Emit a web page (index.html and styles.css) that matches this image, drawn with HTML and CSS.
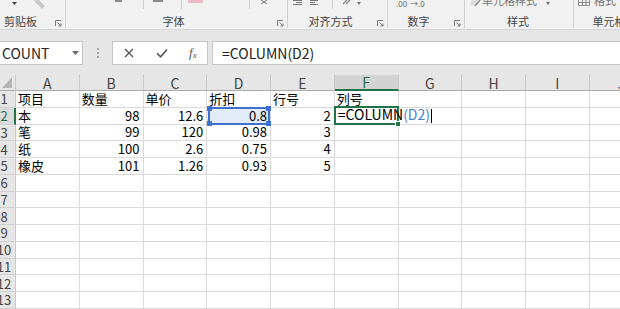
FILE: index.html
```html
<!DOCTYPE html>
<html lang="zh-CN">
<head>
  <meta charset="UTF-8">
  <title>COLUMN</title>
  <link rel="stylesheet" href="styles.css">
</head>
<body>
  <div class="ribbon">
    <div class="group g1">
      <div class="tools">
        <svg class="caret" style="margin-left:12px" width="5" height="4" viewBox="0 0 5 4"><path d="M0 0h5L2.5 3z" fill="#444"/></svg>
        <svg style="margin-left:16px" width="13" height="9" viewBox="0 0 13 9"><path d="M1 0l5 0 6 6-3 3-6-6z" fill="#c9c9c9"/></svg>
      </div>
      <div class="label">剪贴板</div>
      <svg class="launcher" width="7" height="7" viewBox="0 0 7 7"><path d="M.5 6V.5H6M2.5 2.5l3.5 3.5M6 3.5V6H3.5" fill="none" stroke="#7a7a7a"/></svg>
    </div>
    <div class="group g2">
      <div class="tools">
        <span class="dash" style="margin-left:49px;width:7px"></span>
        <span class="sep" style="margin-left:21px"></span>
        <span class="dash" style="margin-left:9px;width:10px"></span>
        <span class="sep" style="margin-left:18px"></span>
        <span class="swatch" style="margin-left:6px"></span>
        <span class="sep" style="margin-left:46px"></span>
        <svg style="margin-left:11px" width="6" height="4" viewBox="0 0 6 4"><path d="M0 0l6 4M6 0L0 4" stroke="#777"/></svg>
      </div>
      <div class="label">字体</div>
      <svg class="launcher" width="7" height="7" viewBox="0 0 7 7"><path d="M.5 6V.5H6M2.5 2.5l3.5 3.5M6 3.5V6H3.5" fill="none" stroke="#7a7a7a"/></svg>
    </div>
    <div class="group g3">
      <div class="tools">
        <svg style="margin-left:5px" width="9" height="5" viewBox="0 0 9 5"><path d="M0 .5h9M3 2.5h6M0 4.5h9" stroke="#777"/></svg>
        <svg style="margin-left:8px" width="8" height="5" viewBox="0 0 8 5"><path d="M0 .5h8M0 2.5h5M0 4.5h8" stroke="#777"/></svg>
        <span class="sep" style="margin-left:14px"></span>
        <svg style="margin-left:9px" width="10" height="5" viewBox="0 0 10 5"><path d="M1 4L5 0M4 4l4-4" stroke="#8a8a8a" stroke-width="1.4"/></svg>
        <svg class="caret" style="margin-left:5px" width="4" height="3" viewBox="0 0 4 3"><path d="M0 0h4L2 3z" fill="#777"/></svg>
      </div>
      <div class="label">对齐方式</div>
      <svg class="launcher" width="7" height="7" viewBox="0 0 7 7"><path d="M.5 6V.5H6M2.5 2.5l3.5 3.5M6 3.5V6H3.5" fill="none" stroke="#7a7a7a"/></svg>
    </div>
    <div class="group g4">
      <div class="tools">
        <span class="tiny" style="margin-left:8px">.00</span>
        <span class="tiny" style="margin-left:3px">→.0</span>
      </div>
      <div class="label">数字</div>
      <svg class="launcher" width="7" height="7" viewBox="0 0 7 7"><path d="M.5 6V.5H6M2.5 2.5l3.5 3.5M6 3.5V6H3.5" fill="none" stroke="#7a7a7a"/></svg>
    </div>
    <div class="group g5">
      <div class="tools">
        <svg style="margin-left:6px" width="10" height="7" viewBox="0 0 10 7"><path d="M0 0h7v5H0z" fill="#dcdcdc"/><path d="M4 6l5-6" stroke="#8a8a8a" stroke-width="1.4"/></svg>
        <span class="cut" style="margin-left:1px">单元格样式</span>
        <svg class="caret" style="margin-left:9px" width="4" height="3" viewBox="0 0 4 3"><path d="M0 0h4L2 3z" fill="#777"/></svg>
      </div>
      <div class="label">样式</div>
    </div>
    <div class="group g6">
      <div class="tools">
        <svg style="margin-left:4px" width="12" height="6" viewBox="0 0 12 6"><path d="M.5 0v5.5h11V0M.5 2.5h11M4.5 0v6M8 0v6" fill="none" stroke="#8a8a8a"/></svg>
        <span class="cut" style="margin-left:4px">格式</span>
        <svg class="caret" style="margin-left:4px" width="4" height="3" viewBox="0 0 4 3"><path d="M0 0h4L2 3z" fill="#777"/></svg>
      </div>
      <div class="label">单元格</div>
    </div>
  </div>

  <div class="formula-area">
    <div class="name-box">
      <span>COUNT</span>
      <svg width="7" height="4" viewBox="0 0 7 4"><path d="M0 0h7L3.5 4z" fill="#6d6d6d"/></svg>
    </div>
    <div class="grip">
      <svg width="2" height="10" viewBox="0 0 2 10"><path d="M0 0h2v2H0zM0 4h2v2H0zM0 8h2v2H0z" fill="#a8a8a8"/></svg>
    </div>
    <div class="fx-buttons">
      <svg class="btn-x" width="10" height="10" viewBox="0 0 10 10"><path d="M1 1l8 8M9 1L1 9" stroke="#555" stroke-width="1.3"/></svg>
      <svg class="btn-ok" width="12" height="10" viewBox="0 0 12 10"><path d="M1 5.2l3.6 3.6L11 1.4" fill="none" stroke="#555" stroke-width="1.6"/></svg>
      <span class="fx">f<sub>x</sub></span>
    </div>
    <div class="formula-input">=COLUMN(D2)</div>
  </div>

  <div class="sheet">
    <div class="corner"><svg width="10" height="11" viewBox="0 0 10 11"><path d="M10 0v11H0z" fill="#b4b4b4"/></svg></div>
    <div class="ch">A</div><div class="ch">B</div><div class="ch">C</div><div class="ch">D</div><div class="ch">E</div>
    <div class="ch sel">F</div><div class="ch">G</div><div class="ch">H</div><div class="ch">I</div><div class="ch">J</div>

    <div class="rh"><span>1</span></div>
    <div class="c">项目</div><div class="c">数量</div><div class="c">单价</div><div class="c">折扣</div><div class="c">行号</div>
    <div class="c">列号</div><div class="c"></div><div class="c"></div><div class="c"></div><div class="c"></div>

    <div class="rh sel"><span>2</span></div>
    <div class="c">本</div><div class="c n">98</div><div class="c n">12.6</div>
    <div class="c n ref">0.8<div class="ref-frame"><i class="h tl"></i><i class="h tr"></i><i class="h bl"></i><i class="h br"></i></div></div>
    <div class="c n">2</div>
    <div class="c active"><span class="edit">=COLUMN<span class="arg">(D2)</span><span class="cursor"></span></span><div class="frame"><i class="fill"></i></div></div>
    <div class="c"></div><div class="c"></div><div class="c"></div><div class="c"></div>

    <div class="rh"><span>3</span></div>
    <div class="c">笔</div><div class="c n">99</div><div class="c n">120</div><div class="c n">0.98</div><div class="c n">3</div>
    <div class="c"></div><div class="c"></div><div class="c"></div><div class="c"></div><div class="c"></div>

    <div class="rh"><span>4</span></div>
    <div class="c">纸</div><div class="c n">100</div><div class="c n">2.6</div><div class="c n">0.75</div><div class="c n">4</div>
    <div class="c"></div><div class="c"></div><div class="c"></div><div class="c"></div><div class="c"></div>

    <div class="rh"><span>5</span></div>
    <div class="c">橡皮</div><div class="c n">101</div><div class="c n">1.26</div><div class="c n">0.93</div><div class="c n">5</div>
    <div class="c"></div><div class="c"></div><div class="c"></div><div class="c"></div><div class="c"></div>

    <div class="rh"><span>6</span></div><div class="c"></div><div class="c"></div><div class="c"></div><div class="c"></div><div class="c"></div><div class="c"></div><div class="c"></div><div class="c"></div><div class="c"></div><div class="c"></div>
    <div class="rh"><span>7</span></div><div class="c"></div><div class="c"></div><div class="c"></div><div class="c"></div><div class="c"></div><div class="c"></div><div class="c"></div><div class="c"></div><div class="c"></div><div class="c"></div>
    <div class="rh"><span>8</span></div><div class="c"></div><div class="c"></div><div class="c"></div><div class="c"></div><div class="c"></div><div class="c"></div><div class="c"></div><div class="c"></div><div class="c"></div><div class="c"></div>
    <div class="rh"><span>9</span></div><div class="c"></div><div class="c"></div><div class="c"></div><div class="c"></div><div class="c"></div><div class="c"></div><div class="c"></div><div class="c"></div><div class="c"></div><div class="c"></div>
    <div class="rh"><span>10</span></div><div class="c"></div><div class="c"></div><div class="c"></div><div class="c"></div><div class="c"></div><div class="c"></div><div class="c"></div><div class="c"></div><div class="c"></div><div class="c"></div>
    <div class="rh"><span>11</span></div><div class="c"></div><div class="c"></div><div class="c"></div><div class="c"></div><div class="c"></div><div class="c"></div><div class="c"></div><div class="c"></div><div class="c"></div><div class="c"></div>
    <div class="rh"><span>12</span></div><div class="c"></div><div class="c"></div><div class="c"></div><div class="c"></div><div class="c"></div><div class="c"></div><div class="c"></div><div class="c"></div><div class="c"></div><div class="c"></div>
    <div class="rh"><span>13</span></div><div class="c"></div><div class="c"></div><div class="c"></div><div class="c"></div><div class="c"></div><div class="c"></div><div class="c"></div><div class="c"></div><div class="c"></div><div class="c"></div>
  </div>
</body>
</html>
```

FILE: styles.css
```css
* {
  box-sizing: border-box;
}
body {
  margin: 0;
  width: 620px;
  height: 309px;
  overflow: hidden;
  background: #fff;
  font-family: "Noto Sans CJK SC", "Liberation Sans", sans-serif;
  color: #000;
}
.ribbon {
  display: flex;
  height: 30px;
  background: #f1f1f1;
  border-bottom: 1px solid #d6d6d6;
  overflow: hidden;
}
.group {
  position: relative;
  flex: none;
  display: flex;
  flex-direction: column;
  border-right: 1px solid #d2d2d2;
  height: 28px;
}
.g1 { width: 66px; }
.g2 { width: 222px; }
.g3 { width: 100px; }
.g4 { width: 77px; }
.g5 { width: 109px; }
.g6 { width: 70px; border-right: none; }
.tools {
  height: 15px;
  display: flex;
  align-items: flex-start;
  overflow: hidden;
}
.tools > * {
  flex: none;
}
.caret {
  margin-top: 2px;
}
.dash {
  height: 2px;
  background: #8a8a8a;
}
.sep {
  width: 1px;
  height: 9px;
  background: #d0d0d0;
}
.swatch {
  width: 15px;
  height: 3px;
  background: #ebb9c4;
}
.tiny {
  font-size: 8px;
  line-height: 8px;
  color: #666;
  margin-top: 0;
}
.cut {
  font-size: 11px;
  line-height: 11px;
  color: #777;
  margin-top: -5px;
}
.label {
  font-size: 11px;
  line-height: 13px;
  color: #444;
  text-align: center;
}
.g1 .label { text-align: left; padding-left: 4px; }
.g2 .label { padding-right: 6px; }
.g3 .label { padding-right: 14px; }
.g4 .label { padding-right: 15px; }
.g5 .label { padding-right: 2px; }
.launcher {
  position: absolute;
  right: 3px;
  bottom: 1px;
}

.formula-area {
  display: flex;
  align-items: flex-start;
  height: 45px;
  padding-top: 11px;
  background: #e6e6e6;
}
.name-box {
  flex: none;
  width: 83px;
  height: 24px;
  display: flex;
  align-items: center;
  justify-content: space-between;
  padding: 0 3px 0 2px;
  background: #fff;
  border: 1px solid #c6c6c6;
  border-left: none;
  font-size: 14px;
  line-height: 1;
  color: #262626;
}
.grip {
  flex: none;
  width: 29px;
  height: 24px;
  display: flex;
  align-items: center;
  padding-left: 14px;
}
.fx-buttons {
  flex: none;
  width: 96px;
  height: 24px;
  display: flex;
  align-items: center;
  padding-left: 11px;
  background: #fff;
  border: 1px solid #c6c6c6;
}
.btn-ok {
  margin-left: 22px;
}
.fx {
  margin-left: 21px;
  font-family: "Liberation Serif", serif;
  font-style: italic;
  font-size: 13px;
  line-height: 1;
  color: #555;
}
.fx sub {
  font-size: 9px;
  vertical-align: -1px;
}
.formula-input {
  flex: 1;
  margin-left: 4px;
  height: 24px;
  display: flex;
  align-items: center;
  padding-left: 9px;
  background: #fff;
  border: 1px solid #c6c6c6;
  border-right: none;
  font-size: 14px;
  line-height: 1;
  color: #222;
}

.sheet {
  display: grid;
  grid-template-columns: 16px repeat(10, 63.75px);
  grid-template-rows: 16px repeat(13, 16.75px);
  width: 620px;
  overflow: hidden;
}
.corner {
  display: flex;
  align-items: flex-end;
  justify-content: flex-end;
  padding: 0 3px 2px 0;
  background: #e6e6e6;
  border-right: 1px solid #c9c9c9;
  border-bottom: 1px solid #ababab;
}
.ch {
  display: flex;
  align-items: center;
  justify-content: center;
  background: #e6e6e6;
  border-right: 1px solid #c9c9c9;
  border-bottom: 1px solid #ababab;
  font-size: 14px;
  line-height: 1;
  color: #444;
}
.ch.sel {
  background: #d3d3d3;
  color: #217346;
  border-bottom: 2px solid #217346;
}
.rh {
  display: flex;
  align-items: center;
  overflow: hidden;
  background: #e6e6e6;
  border-right: 1px solid #c9c9c9;
  border-bottom: 1px solid #cfcfcf;
  font-size: 13px;
  line-height: 1;
  color: #444;
}
.rh span {
  flex: none;
  width: 24px;
  margin-left: -8px;
  text-align: center;
}
.rh.sel {
  background: #dadada;
  color: #217346;
  border-right: 2px solid #217346;
}
.c {
  display: flex;
  align-items: flex-end;
  padding: 0 2px 1px 2px;
  border-right: 1px solid #dadada;
  border-bottom: 1px solid #dadada;
  font-size: 13px;
  line-height: 15px;
  white-space: nowrap;
}
.c.n {
  justify-content: flex-end;
  padding-right: 3px;
}
.ref {
  position: relative;
  background: #e2ebf8;
}
.ref-frame {
  position: absolute;
  top: -1px;
  left: 1px;
  right: 0;
  bottom: -1px;
  border: 2px solid #3f70cf;
}
.h {
  position: absolute;
  width: 5px;
  height: 5px;
  background: #3f70cf;
}
.tl { left: -3px; top: -3px; }
.tr { right: -3px; top: -3px; }
.bl { left: -3px; bottom: -3px; }
.br { right: -3px; bottom: -3px; }
.active {
  position: relative;
  z-index: 2;
  overflow: visible;
  padding-left: 3px;
}
.edit {
  position: relative;
  z-index: 1;
  font-size: 14px;
  line-height: 15px;
}
.arg {
  color: #4a7fd4;
}
.cursor {
  display: inline-block;
  width: 1px;
  height: 14px;
  margin-left: 1px;
  vertical-align: -3px;
  background: #000;
}
.frame {
  position: absolute;
  top: -2px;
  left: -1px;
  right: -1px;
  bottom: -1px;
  border: 2px solid #217346;
}
.fill {
  position: absolute;
  right: -4px;
  bottom: -4px;
  width: 6px;
  height: 6px;
  background: #217346;
  border: 1px solid #fff;
}
```
